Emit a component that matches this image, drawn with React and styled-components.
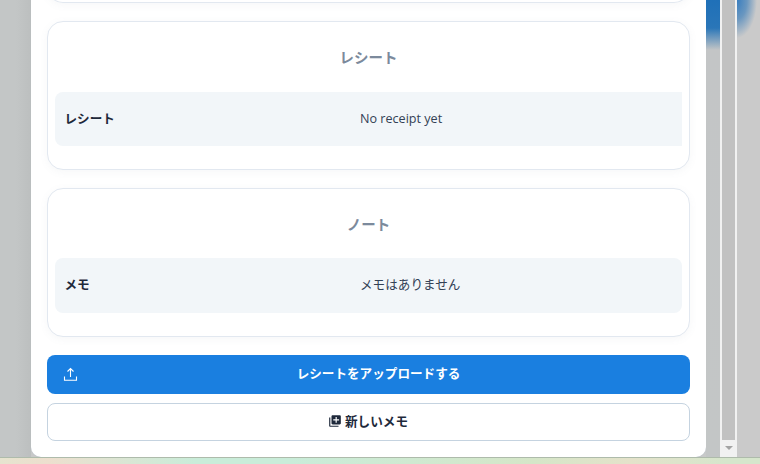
import React from 'react';
import styled, { createGlobalStyle } from 'styled-components';
import { MdLibraryAdd } from 'react-icons/md';

const GlobalStyle = createGlobalStyle`
  html, body { margin: 0; padding: 0; height: 100%; overflow: hidden; }
  body { font-family: "Open Sans", "Noto Sans CJK JP", sans-serif; }
`;

function UploadIcon() {
  return (
    <svg width="15" height="15" viewBox="0 0 15 15" fill="none" stroke="#fff" strokeWidth="1.1">
      <path d="M7.5 10V1.5M4.5 4.5l3-3 3 3" />
      <path d="M1.5 9.5v3.7h12V9.5" />
    </svg>
  );
}

export default function App() {
  return (
    <Screen>
      <GlobalStyle />
      <Main>
        <LeftGutter />
        <Modal>
          <CutCard />
          <Card>
            <CardTitle>レシート</CardTitle>
            <Row square>
              <RowLabel>レシート</RowLabel>
              <RowValue>No receipt yet</RowValue>
            </Row>
          </Card>
          <Card>
            <CardTitle>ノート</CardTitle>
            <Row tall>
              <RowLabel>メモ</RowLabel>
              <RowValue>メモはありません</RowValue>
            </Row>
          </Card>
          <UploadButton>
            <UploadIcon />
            <span>レシートをアップロードする</span>
          </UploadButton>
          <MemoButton>
            <MdLibraryAdd size={14} />
            <span>新しいメモ</span>
          </MemoButton>
        </Modal>
        <RightGutter />
        <Scrollbar>
          <Thumb />
          <ArrowDown />
        </Scrollbar>
        <PageRest />
      </Main>
      <BottomStrip />
    </Screen>
  );
}

const Screen = styled.div`
  width: 760px;
  height: 464px;
  display: flex;
  flex-direction: column;
  overflow: hidden;
  background: #c8c9c9;
`;

const Main = styled.div`
  height: 457px;
  display: flex;
`;

const LeftGutter = styled.div`
  width: 31px;
  flex: none;
  background: linear-gradient(90deg, #c3c6c6 0, #c3c6c6 16px, #bcbfbf 31px);
`;

const Modal = styled.div`
  width: 675px;
  height: 457px;
  flex: none;
  box-sizing: border-box;
  padding: 0 16px 16px;
  display: flex;
  flex-direction: column;
  justify-content: flex-end;
  background: #fff;
  border-radius: 0 0 10px 10px;
  box-shadow: 0 0 1px #a9b6c4;
`;

const Card = styled.section`
  height: 149px;
  flex: none;
  box-sizing: border-box;
  margin-bottom: 18px;
  padding: 20px 7px 0;
  background: #fff;
  border: 1px solid #e2e8f0;
  border-radius: 16px;
  box-shadow: 0 2px 8px rgba(100, 116, 139, 0.06);
`;

const CutCard = styled(Card)`
  height: 20px;
  border-top: none;
  border-radius: 0 0 16px 16px;
`;

const CardTitle = styled.h3`
  margin: 0;
  height: 50px;
  line-height: 32px;
  text-align: center;
  font-size: 14.5px;
  font-weight: 700;
  color: #7c8a9c;
`;

const Row = styled.div`
  height: ${props => (props.tall ? '55px' : '54px')};
  margin-top: ${props => (props.tall ? '-1px' : '0')};
  display: grid;
  grid-template-columns: 305px 1fr;
  align-items: center;
  padding-bottom: ${props => (props.tall ? '4px' : '2px')};
  box-sizing: border-box;
  background: #f2f6f9;
  border-radius: ${props => (props.square ? '8px 0 0 8px' : '8px')};
`;

const RowLabel = styled.div`
  padding: 0 0 1px 9.5px;
  font-size: 12.6px;
  font-weight: 700;
  color: #1e293b;
`;

const RowValue = styled.div`
  font-size: 12.6px;
  color: #334155;
`;

const UploadButton = styled.button`
  height: 39px;
  flex: none;
  margin: 0 0 9px;
  padding: 0 15px 5px 16px;
  display: flex;
  align-items: center;
  border: none;
  border-radius: 8px;
  background: #1a7fe0;
  color: #fff;
  font: 700 12.6px "Open Sans", "Noto Sans CJK JP", sans-serif;
  svg { margin-top: 5px; }
  span { flex: 1; text-align: center; margin-left: 4px; }
`;

const MemoButton = styled.button`
  height: 38px;
  flex: none;
  padding: 0 1px 4px 0;
  display: flex;
  align-items: center;
  justify-content: center;
  gap: 3px;
  background: #fff;
  border: 1px solid #c5d3e0;
  border-radius: 8px;
  color: #1e293b;
  font: 700 12.6px "Open Sans", "Noto Sans CJK JP", sans-serif;
  svg { margin-top: 2px; }
`;

const RightGutter = styled.div`
  width: 14px;
  flex: none;
  background: linear-gradient(180deg, #1f70b8 0, #2a76b8 28px, #c3c5c6 50px, #c3c6c6 100%);
`;

const Scrollbar = styled.div`
  width: 17px;
  flex: none;
  box-sizing: border-box;
  padding: 0 2px;
  display: flex;
  flex-direction: column;
  background: #f1f1f1;
`;

const Thumb = styled.div`
  height: 440px;
  flex: none;
  background: #c1c1c1;
`;

const ArrowDown = styled.div`
  width: 0;
  height: 0;
  margin: 6px auto 0;
  border-left: 4px solid transparent;
  border-right: 4px solid transparent;
  border-top: 4px solid #a3a3a3;
`;

const PageRest = styled.div`
  flex: 1;
  background: radial-gradient(ellipse 20px 38px at 0 0, #3a7ebf 0, #6a97c0 50%, rgba(200, 201, 201, 0) 100%), #cacaca;
`;

const BottomStrip = styled.div`
  height: 7px;
  border-top: 1px solid #aebbab;
  box-sizing: border-box;
  background: linear-gradient(90deg, #e6e4cf 0, #eddfce 48px, #c9ecd9 195px, #c9ecd9 290px, #d5e6c8 533px, #e4e2ca 630px, #d6e6cc 727px, #d6e6cc 100%);
`;
